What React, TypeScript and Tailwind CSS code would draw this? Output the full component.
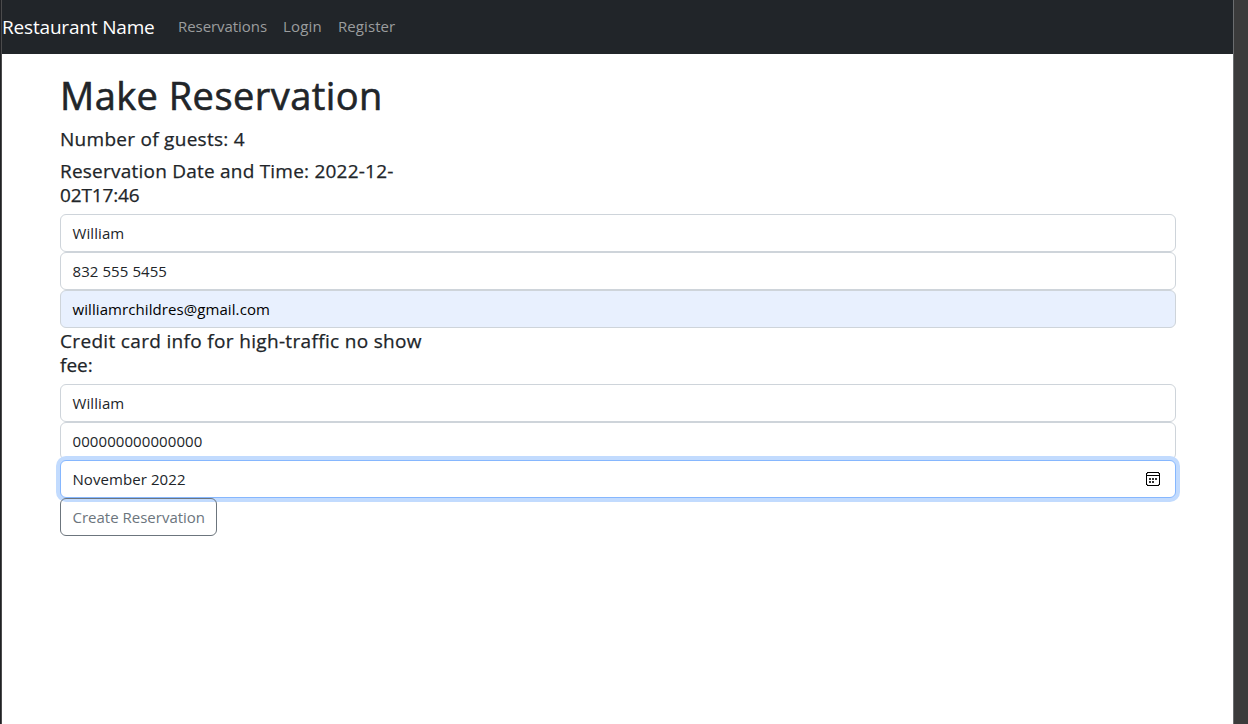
import type { ReactNode } from "react";

function Field({ children, className = "border-[#ced4da] bg-white text-[#212529]" }: { children: ReactNode; className?: string }) {
  return (
    <div className={`flex h-[38px] w-full items-center justify-between rounded-md border pr-1 pl-[11.5px] text-[15px] leading-6 tracking-[0.08px] whitespace-nowrap ${className}`}>
      {children}
    </div>
  );
}

function Heading({ children }: { children: ReactNode }) {
  return (
    <h5 className="pt-px pb-[7px] text-[19px] leading-6 font-medium whitespace-nowrap text-[#212529] [-webkit-text-stroke:0.25px_#212529]">
      {children}
    </h5>
  );
}

function CalendarIcon() {
  return (
    <svg className="mr-[11px] shrink-0" width="14" height="14" viewBox="0 0 14 14" fill="none" shapeRendering="crispEdges">
      <path d="M1 0h12v1H1zM1 13h12v1H1zM0 1h1v12H0zM13 1h1v12h-1zM1 3h12v1H1z" fill="#000" />
      <path d="M1 1h1v1H1zM12 1h1v1h-1zM1 12h1v1H1zM12 12h1v1h-1z" fill="#777" />
      <path d="M6 6h2v2H6zM9 6h2v2H9zM3 6h2v2H3zM3 9h2v2H3zM6 9h2v2H6z" fill="#333" />
    </svg>
  );
}

export default function App() {
  return (
    <div className="flex h-[724px] w-[1248px] overflow-hidden bg-white font-['Open_Sans',sans-serif] text-[#212529]">
      <div className="w-px shrink-0 bg-[#202124]" />
      <div className="w-px shrink-0 bg-[#4b4b4c]" />
      <main className="w-[1231px] shrink-0">
        <nav className="flex h-[54px] items-center bg-[#212529] whitespace-nowrap">
          <span className="w-[176px] text-[19px] leading-[30px] tracking-[-0.18px] text-white">Restaurant Name</span>
          <span className="w-[105px] pb-0.5 text-[15px] tracking-[-0.06px] text-[#9b9d9e]">Reservations</span>
          <span className="w-[55px] pb-0.5 text-[15px] tracking-[0.15px] text-[#9b9d9e]">Login</span>
          <span className="pb-0.5 text-[15px] tracking-[0.08px] text-[#9b9d9e]">Register</span>
        </nav>
        <section className="ml-[58px] w-[1116px] pt-[17px]">
          <h1 className="mb-[7px] text-[38px] leading-[48px] font-medium tracking-[0.45px] whitespace-nowrap [-webkit-text-stroke:0.6px_#212529]">Make Reservation</h1>
          <Heading><span className="tracking-[0.28px]">Number of guests: 4</span></Heading>
          <Heading>
            <span className="tracking-[0.22px]">Reservation Date and Time: 2022-12-</span><br />
            <span className="tracking-[-0.15px]">02T17:46</span>
          </Heading>
          <Field>William</Field>
          <Field>832 555 5455</Field>
          <Field className="border-[#ced4da] bg-[#e8f0fe] text-black">williamrchildres@gmail.com</Field>
          <Heading>
            <span className="tracking-[0.33px]">Credit card info for high-traffic no show</span><br />
            <span>fee:</span>
          </Heading>
          <Field>William</Field>
          <Field>000000000000000</Field>
          <Field className="relative border-[#86b7fe] bg-white text-[#212529] shadow-[0_0_0_4px_#c2dbfe]">November 2022<CalendarIcon /></Field>
          <button className="relative flex h-[38px] w-[157px] items-center rounded-md border border-[#6c757d] px-[11.5px] text-[15px] whitespace-nowrap text-[#6c757d]">
            Create Reservation
          </button>
        </section>
      </main>
      <div className="w-px shrink-0 bg-[#6b6d6f]" />
      <div className="grow bg-[#3b3b3b]" />
    </div>
  );
}
